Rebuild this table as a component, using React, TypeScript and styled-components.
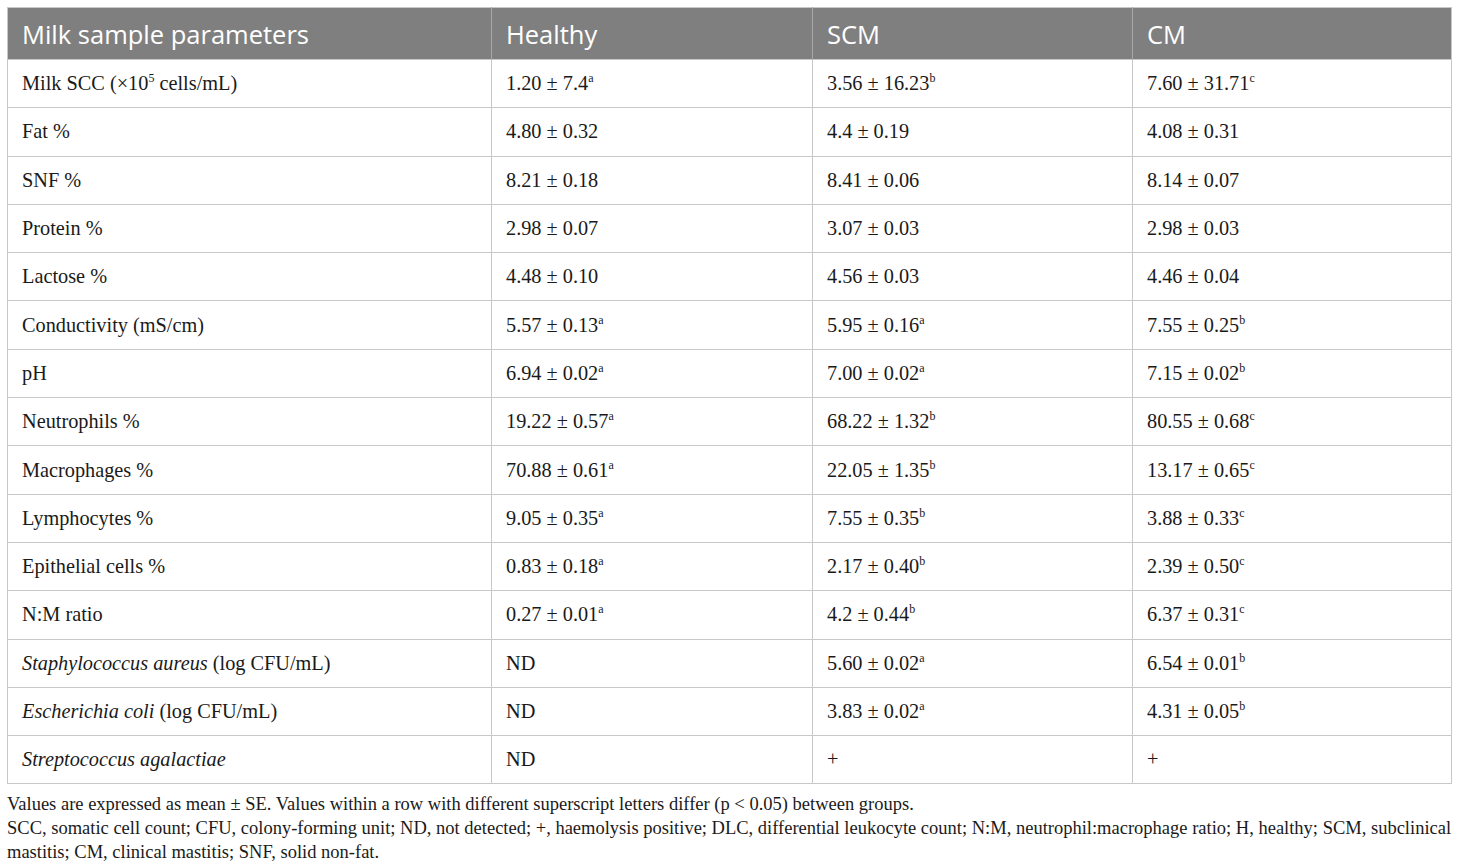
import React from "react";
import styled, { createGlobalStyle } from "styled-components";

const GlobalStyle = createGlobalStyle`
  body {
    margin: 0;
    background: #fff;
  }
`;

const Page = styled.div`
  padding: 7px 8px 0 7px;
  width: 1445px;
`;

const Table = styled.table`
  width: 100%;
  border-collapse: collapse;
  border: 1px solid #c8c8c8;
  table-layout: fixed;
`;

const HeadCell = styled.th<{ $w?: number }>`
  box-sizing: border-box;
  width: ${(p) => (p.$w ? `${p.$w}px` : "auto")};
  background: #7f7f7f;
  color: #fff;
  font-family: "Open Sans", "Noto Sans", sans-serif;
  font-weight: 400;
  font-size: 25.5px;
  text-align: left;
  height: 52px;
  padding: 0 14px;
  border-left: 1px solid #a8a8a8;
  &:first-child {
    border-left: none;
  }
`;

const Row = styled.tr`
  border-top: 1px solid #c8c8c8;
`;

const Cell = styled.td`
  height: 47.3px;
  padding: 0 14px;
  font-family: "Liberation Serif", "Times New Roman", serif;
  font-size: 20.3px;
  color: #1a1a1a;
  border-left: 1px solid #c8c8c8;
  vertical-align: middle;
  &:first-child {
    border-left: none;
  }
`;

const Sup = styled.sup`
  font-size: 12px;
  line-height: 0;
  vertical-align: 8px;
`;

const Footnote = styled.div`
  margin-top: 8px;
  font-family: "Liberation Serif", "Times New Roman", serif;
  font-size: 18.5px;
  line-height: 24px;
  color: #1a1a1a;
`;

const NoteLine = styled.div`
  white-space: nowrap;
`;

type Value = { v: string; s?: string };
type RowData = { label: React.ReactNode; values: Value[] };

const rows: RowData[] = [
  {
    label: (
      <>
        Milk SCC (×10<Sup>5</Sup> cells/mL)
      </>
    ),
    values: [
      { v: "1.20 ± 7.4", s: "a" },
      { v: "3.56 ± 16.23", s: "b" },
      { v: "7.60 ± 31.71", s: "c" },
    ],
  },
  { label: "Fat %", values: [{ v: "4.80 ± 0.32" }, { v: "4.4 ± 0.19" }, { v: "4.08 ± 0.31" }] },
  { label: "SNF %", values: [{ v: "8.21 ± 0.18" }, { v: "8.41 ± 0.06" }, { v: "8.14 ± 0.07" }] },
  { label: "Protein %", values: [{ v: "2.98 ± 0.07" }, { v: "3.07 ± 0.03" }, { v: "2.98 ± 0.03" }] },
  { label: "Lactose %", values: [{ v: "4.48 ± 0.10" }, { v: "4.56 ± 0.03" }, { v: "4.46 ± 0.04" }] },
  {
    label: "Conductivity (mS/cm)",
    values: [
      { v: "5.57 ± 0.13", s: "a" },
      { v: "5.95 ± 0.16", s: "a" },
      { v: "7.55 ± 0.25", s: "b" },
    ],
  },
  {
    label: "pH",
    values: [
      { v: "6.94 ± 0.02", s: "a" },
      { v: "7.00 ± 0.02", s: "a" },
      { v: "7.15 ± 0.02", s: "b" },
    ],
  },
  {
    label: "Neutrophils %",
    values: [
      { v: "19.22 ± 0.57", s: "a" },
      { v: "68.22 ± 1.32", s: "b" },
      { v: "80.55 ± 0.68", s: "c" },
    ],
  },
  {
    label: "Macrophages %",
    values: [
      { v: "70.88 ± 0.61", s: "a" },
      { v: "22.05 ± 1.35", s: "b" },
      { v: "13.17 ± 0.65", s: "c" },
    ],
  },
  {
    label: "Lymphocytes %",
    values: [
      { v: "9.05 ± 0.35", s: "a" },
      { v: "7.55 ± 0.35", s: "b" },
      { v: "3.88 ± 0.33", s: "c" },
    ],
  },
  {
    label: "Epithelial cells %",
    values: [
      { v: "0.83 ± 0.18", s: "a" },
      { v: "2.17 ± 0.40", s: "b" },
      { v: "2.39 ± 0.50", s: "c" },
    ],
  },
  {
    label: "N:M ratio",
    values: [
      { v: "0.27 ± 0.01", s: "a" },
      { v: "4.2 ± 0.44", s: "b" },
      { v: "6.37 ± 0.31", s: "c" },
    ],
  },
  {
    label: (
      <>
        <i>Staphylococcus aureus</i> (log CFU/mL)
      </>
    ),
    values: [{ v: "ND" }, { v: "5.60 ± 0.02", s: "a" }, { v: "6.54 ± 0.01", s: "b" }],
  },
  {
    label: (
      <>
        <i>Escherichia coli</i> (log CFU/mL)
      </>
    ),
    values: [{ v: "ND" }, { v: "3.83 ± 0.02", s: "a" }, { v: "4.31 ± 0.05", s: "b" }],
  },
  {
    label: <i>Streptococcus agalactiae</i>,
    values: [{ v: "ND" }, { v: "+" }, { v: "+" }],
  },
];

const App: React.FC = () => {
  return (
    <Page>
      <GlobalStyle />
      <Table>
        <thead>
          <tr>
            <HeadCell $w={484}>Milk sample parameters</HeadCell>
            <HeadCell $w={321}>Healthy</HeadCell>
            <HeadCell $w={320}>SCM</HeadCell>
            <HeadCell>CM</HeadCell>
          </tr>
        </thead>
        <tbody>
          {rows.map((row, i) => (
            <Row key={i}>
              <Cell>{row.label}</Cell>
              {row.values.map((val, j) => (
                <Cell key={j}>
                  {val.v}
                  {val.s && <Sup>{val.s}</Sup>}
                </Cell>
              ))}
            </Row>
          ))}
        </tbody>
      </Table>
      <Footnote>
        <NoteLine>
          Values are expressed as mean ± SE. Values within a row with different superscript letters differ (p &lt;
          0.05) between groups.
        </NoteLine>
        <NoteLine>
          SCC, somatic cell count; CFU, colony-forming unit; ND, not detected; +, haemolysis positive; DLC,
          differential leukocyte count; N:M, neutrophil:macrophage ratio; H, healthy; SCM, subclinical
        </NoteLine>
        <NoteLine>mastitis; CM, clinical mastitis; SNF, solid non-fat.</NoteLine>
      </Footnote>
    </Page>
  );
};

export default App;
